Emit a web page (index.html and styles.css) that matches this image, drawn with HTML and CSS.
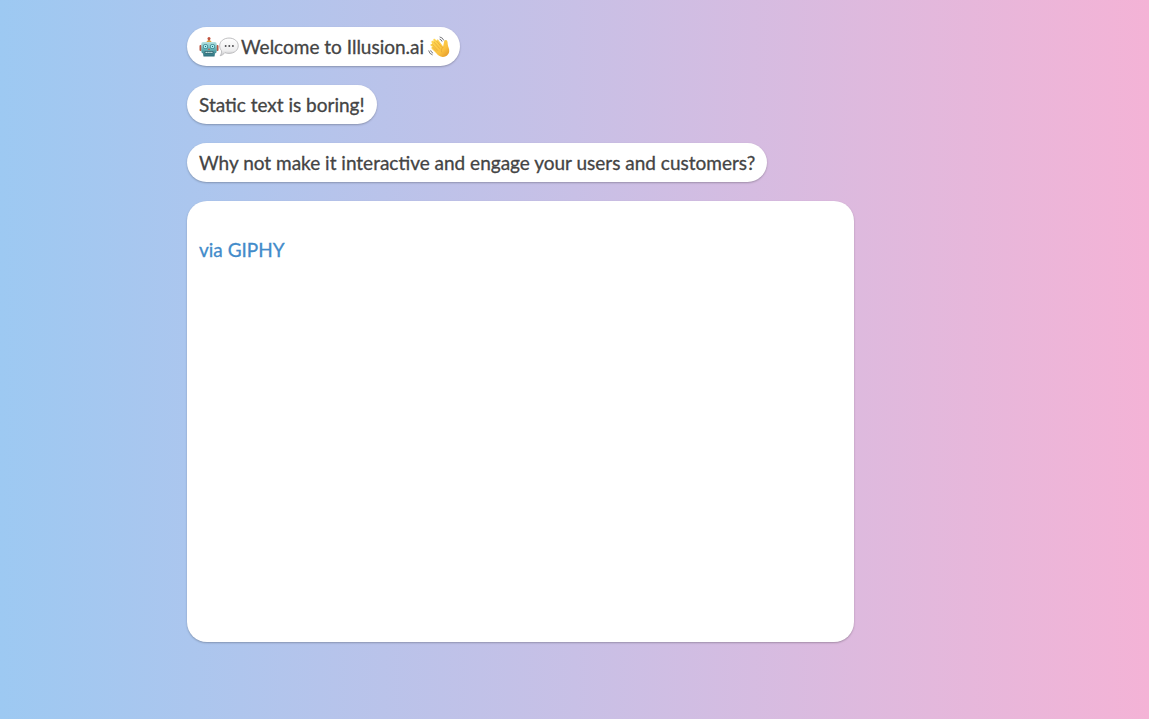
FILE: index.html
```html
<!DOCTYPE html>
<html lang="en">
<head>
<meta charset="utf-8">
<meta name="viewport" content="width=device-width, initial-scale=1">
<title>Illusion.ai</title>
<link rel="stylesheet" href="styles.css">
</head>
<body>
<main class="chat">
  <p class="bubble">
    <svg class="emoji" viewBox="0 0 20 20" role="img" aria-label="Robot">
      <defs>
        <linearGradient id="metal" x1="0" y1="0" x2="0" y2="1"><stop offset="0" stop-color="#b8e2e0"/><stop offset=".5" stop-color="#63b2b5"/><stop offset="1" stop-color="#2c6d7b"/></linearGradient>
      </defs>
      <path d="M10 2v4" stroke="#8b5b48" stroke-width="1.5"/>
      <circle cx="10" cy="1.600" r="1.500" fill="#c2523d"/>
      <path d="M7 5.500 8.500 3.500h3L13 5.500z" fill="#e3a33e"/>
      <rect x=".5" y="8" width="2.200" height="6" rx="1" fill="#b95440"/>
      <rect x="17.300" y="8" width="2.200" height="6" rx="1" fill="#b95440"/>
      <path d="M4 5h12q1.500 0 1.700 2v7q0 2-1.700 2.500l-.5 3h-11L4 16.500Q2.300 16 2.300 14V7Q2.500 5 4 5z" fill="url(#metal)"/>
      <circle cx="6.500" cy="9.500" r="2.500" fill="#458792"/>
      <circle cx="13.500" cy="9.500" r="2.500" fill="#458792"/>
      <circle cx="6.500" cy="9.500" r="1.700" fill="#b8ffff"/>
      <circle cx="13.500" cy="9.500" r="1.700" fill="#b8ffff"/>
      <circle cx="6.500" cy="9.500" r=".7" fill="#27616e"/>
      <circle cx="13.500" cy="9.500" r=".7" fill="#27616e"/>
      <path d="m10 11 1 2H9z" fill="#c45b48"/>
      <rect x="5.500" y="14" width="9" height="2.600" rx="1" fill="#285d6a"/>
      <path d="M6.500 15.300h7" stroke="#d6f2ed" stroke-width="1.200" stroke-dasharray="1.400 .5"/>
    </svg><svg class="emoji" viewBox="1 0 21 20" role="img" aria-label="Speech balloon">
      <defs>
        <linearGradient id="balloon" x1="0" y1="0" x2="0" y2="1"><stop offset="0" stop-color="#fff"/><stop offset=".7" stop-color="#eeeeef"/><stop offset="1" stop-color="#c5c5c8"/></linearGradient>
      </defs>
      <path d="M11.500.6c5.600 0 9.700 3.500 9.700 8.100s-4.100 8-9.700 8c-1.600 0-3-.2-4.300-.8-1.300 1.600-3 3-5 3.300 1.200-1.500 1.500-3.200 1.500-5.200-1.300-1.400-2-3.200-2-5.300C1.700 4.100 6 .6 11.500.6z" fill="url(#balloon)" stroke="#b4b4b7" stroke-width=".9"/>
      <g fill="#4d4d50"><circle cx="8" cy="9" r="1"/><circle cx="11.800" cy="9" r="1"/><circle cx="15.600" cy="9" r="1"/></g>
    </svg><span class="greeting">Welcome to Illusion.ai</span><svg class="emoji wave" viewBox="0 0 22 22" role="img" aria-label="Waving hand">
      <defs>
        <linearGradient id="skin" x1="0" y1="0" x2="1" y2="1"><stop offset="0" stop-color="#ffdc57"/><stop offset=".65" stop-color="#fbc13f"/><stop offset="1" stop-color="#df9225"/></linearGradient>
      </defs>
      <path d="M2.600 9.400c-.6-1.100.8-2 1.700-1L3.500 6.300c-.5-1.300 1.100-2.100 1.900-1l.5.700-.6-1.800c-.3-1.400 1.400-2 2.200-.8l1.100 1.700c-.4-1.500 1.200-2.100 2-.9l4.500 6.300.8-3.800c.3-1.600.6-2.900 2.200-2.600 1.500.3 1.500 2.300 1.600 3.800.2 2.600 1.900 4.900 1.500 7.500-.5 3.200-3.100 5.400-6.200 5.500-3 .1-4.900-1.500-6.700-3.600l-4.600-4.600c-.9-1.200.3-2.200 1.200-1.400z" fill="url(#skin)"/>
      <path d="m4.400 8.500 5.300 6M5.900 6.100l5.800 6.400M8.600 5.100l5 6M5 11.400l3.400 3.700M15 11.200c-1.700 1.600-2 2.900-1.400 4.800" fill="none" stroke="#dda034" stroke-width=".6" stroke-linecap="round"/>
      <path d="M12 1q2.800.5 3.700 3.100M12 3.200q1.500.4 2 2M.7 14.800q.4 3 3.500 4M2.700 14.700q.3 1.600 2 2.300" fill="none" stroke="#77777b" stroke-width="1" stroke-linecap="round"/>
    </svg>
  </p>
  <p class="bubble">Static text is boring!</p>
  <p class="bubble">Why not make it interactive and engage your users and customers?</p>
  <div class="bubble media">
    <a class="credit" href="#giphy">via GIPHY</a>
  </div>
</main>
</body>
</html>
```
FILE: styles.css
```css
* { box-sizing: border-box; }

body {
  margin: 0;
  min-height: 100vh;
  background: linear-gradient(90deg, #9dc9f2, #c8c0e6 50%, #f4b3d6);
  color: #444;
  font-family: Lato, "Liberation Sans", sans-serif;
  font-size: 19px;
  line-height: 24px;
}

.chat {
  display: flex;
  flex-direction: column;
  align-items: flex-start;
  gap: 19px;
  max-width: 775px;
  margin: 0 auto;
  padding: 27px 0;
}

.bubble {
  display: flex;
  align-items: center;
  min-height: 39px;
  margin: 0;
  padding: 8px 12px 7px;
  border-radius: 20px;
  background: #fff;
  box-shadow: 0 1px 2px rgba(0, 0, 0, 0.25);
  -webkit-text-stroke: 0.3px currentColor;
}

.emoji {
  width: 20px;
  height: 20px;
  flex: none;
}

.greeting { margin: 0 4px 0 2px; }

.wave {
  width: 22px;
  height: 22px;
  margin-right: -2px;
}

.media {
  align-items: flex-start;
  width: 86%;
  min-height: 441px;
  padding-top: 37px;
}

.credit {
  color: #428bca;
  text-decoration: none;
}
```
